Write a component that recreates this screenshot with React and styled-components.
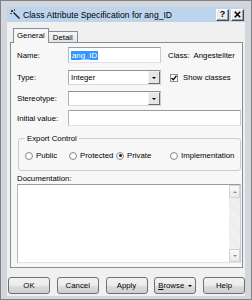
import styled, { createGlobalStyle } from "styled-components";

const GlobalStyle = createGlobalStyle`
  html, body { margin: 0; padding: 0; background: #ffffff; }
  body { font-family: "Liberation Sans", Arial, sans-serif; font-size: 7.8px; color: #000; }
  * { box-sizing: border-box; }
`;

const Window = styled.div`
  width: 252px;
  height: 300px;
  border: 1px solid #7f8388;
  background: #d3d6da;
  padding: 6px 6px 3px;
  display: flex;
  flex-direction: column;
`;

const TitleBar = styled.div`
  height: 15px;
  background: #bdd4ee;
  display: flex;
  align-items: center;
  padding: 0 1px 0 3px;
`;

const TitleText = styled.span`
  flex: 1;
  margin-left: 2px;
  font-size: 8.6px;
  white-space: nowrap;
`;

const CaptionButton = styled.div`
  width: 13px;
  height: 12px;
  margin-left: ${(p) => p.$gap || 0}px;
  border: 1px solid;
  border-color: #ffffff #4a4a4a #4a4a4a #ffffff;
  background: #ececec;
  box-shadow: inset -1px -1px #a0a0a0;
  display: flex;
  align-items: center;
  justify-content: center;
  font-weight: bold;
  font-size: 9px;
  line-height: 1;
`;

const Body = styled.div`
  flex: 1;
  background: #f0f0f0;
  display: flex;
  flex-direction: column;
`;

const TabStrip = styled.div`
  height: 21px;
  display: flex;
  align-items: flex-end;
  padding-left: 6px;
  position: relative;
  z-index: 1;
`;

const Tab = styled.div`
  height: ${(p) => (p.$active ? 15 : 12)}px;
  margin-left: ${(p) => (p.$active ? 0 : -1)}px;
  padding: 0 ${(p) => (p.$active ? 3 : 4)}px;
  border: 1px solid #898c95;
  border-bottom: ${(p) => (p.$active ? "none" : "1px solid #898c95")};
  background: ${(p) => (p.$active ? "#f7f7f7" : "linear-gradient(#f6f6f6, #e4e4e4)")};
  display: flex;
  align-items: center;
  padding-bottom: ${(p) => (p.$active ? 2 : 0)}px;
`;

const Panel = styled.div`
  height: 226px;
  margin: -1px 2px 0 3px;
  border: 1px solid #898c95;
  background: #f7f7f7;
  padding: 4px 1px 0 6px;
  display: flex;
  flex-direction: column;
`;

const Row = styled.div`
  display: flex;
  align-items: center;
  height: ${(p) => p.$h}px;
  margin-top: ${(p) => p.$mt}px;
`;

const Label = styled.span`
  width: 51px;
  flex-shrink: 0;
  white-space: nowrap;
`;

const TextBox = styled.div`
  width: ${(p) => (p.$wide ? "auto" : "93px")};
  flex: ${(p) => (p.$wide ? 1 : "none")};
  height: 100%;
  border: 1px solid;
  border-color: #9a9ca3 #c8ccd3 #dfe3e9 #b4b8c0;
  background: #ffffff;
  display: flex;
  align-items: center;
  padding-left: 2px;
`;

const Selected = styled.span`
  background: #3399ff;
  color: #ffffff;
  padding: 0 1px;
`;

const Combo = styled.div`
  width: 93px;
  height: 100%;
  border: 1px solid;
  border-color: #8d8f95 #c8ccd3 #d6dae0 #a9adb5;
  background: #ffffff;
  display: flex;
  align-items: center;
  padding-left: 2px;
`;

const ComboText = styled.span`
  flex: 1;
`;

const DropButton = styled.div`
  width: 12px;
  height: 100%;
  border: 1px solid;
  border-color: #f4f4f4 #6b6b6b #6b6b6b #f4f4f4;
  background: #e6e6e6;
  display: flex;
  align-items: center;
  justify-content: center;
`;

const Arrow = styled.span`
  width: 0;
  height: 0;
  border-left: ${(p) => p.$s || 3}px solid transparent;
  border-right: ${(p) => p.$s || 3}px solid transparent;
  border-top: ${(p) => p.$s || 3}px solid ${(p) => p.$c || "#000"};
  margin-left: ${(p) => p.$ml || 0}px;
`;

const UpArrow = styled.span`
  width: 0;
  height: 0;
  border-left: 2.5px solid transparent;
  border-right: 2.5px solid transparent;
  border-bottom: 2.5px solid #8a8a8a;
`;

const SideText = styled.span`
  margin-left: ${(p) => p.$ml}px;
  white-space: nowrap;
`;

const Check = styled.div`
  width: 8px;
  height: 8px;
  margin-left: 9px;
  border: 1px solid #8f8f8f;
  background: #ffffff;
  display: flex;
  align-items: center;
  justify-content: center;
`;

const Group = styled.fieldset`
  margin: 8px 0 0 1px;
  height: 37px;
  border: 1px solid #c9ccd1;
  border-radius: 3px;
  padding: 0 0 0 6px;
`;

const Legend = styled.legend`
  padding: 0 2px;
  margin-left: 0;
  line-height: 9px;
`;

const RadioRow = styled.div`
  display: flex;
  align-items: center;
  height: 9px;
  margin-top: 8px;
`;

const RadioItem = styled.div`
  width: ${(p) => (p.$w ? p.$w + "px" : "auto")};
  display: flex;
  align-items: center;
  gap: 3px;
  white-space: nowrap;
`;

const Radio = styled.span`
  width: 8px;
  height: 8px;
  border-radius: 50%;
  border: 1px solid #8e8f8f;
  background: radial-gradient(circle, #ffffff 30%, #e2e4e7 100%);
  display: flex;
  align-items: center;
  justify-content: center;
  &::after {
    content: "";
    width: 3px;
    height: 3px;
    border-radius: 50%;
    background: ${(p) => (p.$on ? "#1a1a1a" : "transparent")};
  }
`;

const DocLabel = styled.div`
  margin-top: 3px;
  height: 9px;
  line-height: 9px;
`;

const DocBox = styled.div`
  margin-top: 1px;
  height: 79px;
  border: 1px solid;
  border-color: #9a9ca3 #c8ccd3 #dfe3e9 #b4b8c0;
  background: #ffffff;
  display: flex;
  justify-content: flex-end;
`;

const ScrollBar = styled.div`
  width: 11px;
  display: flex;
  flex-direction: column;
  background: #f3f3f3;
`;

const ScrollButton = styled.div`
  height: 13px;
  border: 1px solid #d2d2d2;
  background: linear-gradient(#fafafa, #e9e9e9);
  display: flex;
  align-items: center;
  justify-content: center;
`;

const ScrollTrack = styled.div`
  flex: 1;
  background: repeating-linear-gradient(45deg, #f4f4f4 0 1px, #e9e9e9 1px 2px);
`;

const ButtonRow = styled.div`
  display: flex;
  gap: 6.75px;
  margin-top: 9px;
  padding-left: 1px;
`;

const Button = styled.div`
  width: 43px;
  height: 17px;
  border: 1px solid #707070;
  border-radius: 3px;
  background: linear-gradient(#f2f2f2 0%, #ebebeb 50%, #dddddd 51%, #cfcfcf 100%);
  display: flex;
  align-items: center;
  justify-content: center;
`;

const TitleIcon = () => (
  <svg width="11" height="11" viewBox="0 0 11 11">
    <rect x="1" y="1" width="2" height="2" fill="#333" />
    <rect x="4" y="0" width="1" height="2" fill="#555" />
    <rect x="0" y="4" width="2" height="1" fill="#555" />
    <path d="M3.5 3.5 L9.5 9.5" stroke="#222" strokeWidth="1.4" />
  </svg>
);

const CheckMark = () => (
  <svg width="6" height="6" viewBox="0 0 6 6">
    <path d="M0.5 3 L2.3 4.8 L5.5 0.8" stroke="#111" strokeWidth="1.4" fill="none" />
  </svg>
);

const CloseGlyph = () => (
  <svg width="7" height="7" viewBox="0 0 7 7">
    <path d="M0.8 0.8 L6.2 6.2 M6.2 0.8 L0.8 6.2" stroke="#000" strokeWidth="1.6" />
  </svg>
);

const radios = [
  { label: "Public", w: 44 },
  { label: "Protected", w: 47 },
  { label: "Private", w: 54, on: true },
  { label: "Implementation" },
];

export default function App() {
  return (
    <>
      <GlobalStyle />
      <Window>
        <TitleBar>
          <TitleIcon />
          <TitleText>Class Attribute Specification for ang_ID</TitleText>
          <CaptionButton>?</CaptionButton>
          <CaptionButton $gap={2}>
            <CloseGlyph />
          </CaptionButton>
        </TitleBar>
        <Body>
          <TabStrip>
            <Tab $active>General</Tab>
            <Tab>Detail</Tab>
          </TabStrip>
          <Panel>
            <Row $h={16} $mt={0}>
              <Label>Name:</Label>
              <TextBox>
                <Selected>ang_ID</Selected>
              </TextBox>
              <SideText $ml={7}>Class:&nbsp; Angestellter</SideText>
            </Row>
            <Row $h={15} $mt={7}>
              <Label>Type:</Label>
              <Combo>
                <ComboText>Integer</ComboText>
                <DropButton>
                  <Arrow $s={2.5} />
                </DropButton>
              </Combo>
              <Check>
                <CheckMark />
              </Check>
              <SideText $ml={5}>Show classes</SideText>
            </Row>
            <Row $h={15} $mt={6}>
              <Label>Stereotype:</Label>
              <Combo>
                <ComboText />
                <DropButton>
                  <Arrow $s={2.5} />
                </DropButton>
              </Combo>
            </Row>
            <Row $h={16} $mt={4}>
              <Label>Initial value:</Label>
              <TextBox $wide />
            </Row>
            <Group>
              <Legend>Export Control</Legend>
              <RadioRow>
                {radios.map((r) => (
                  <RadioItem key={r.label} $w={r.w}>
                    <Radio $on={r.on} />
                    {r.label}
                  </RadioItem>
                ))}
              </RadioRow>
            </Group>
            <DocLabel>Documentation:</DocLabel>
            <DocBox>
              <ScrollBar>
                <ScrollButton>
                  <UpArrow />
                </ScrollButton>
                <ScrollTrack />
                <ScrollButton>
                  <Arrow $s={2.5} $c="#8a8a8a" />
                </ScrollButton>
              </ScrollBar>
            </DocBox>
          </Panel>
          <ButtonRow>
            <Button>OK</Button>
            <Button>Cancel</Button>
            <Button>Apply</Button>
            <Button>
              <u>B</u>rowse
              <Arrow $s={2.5} $ml={4} />
            </Button>
            <Button>Help</Button>
          </ButtonRow>
        </Body>
      </Window>
    </>
  );
}
